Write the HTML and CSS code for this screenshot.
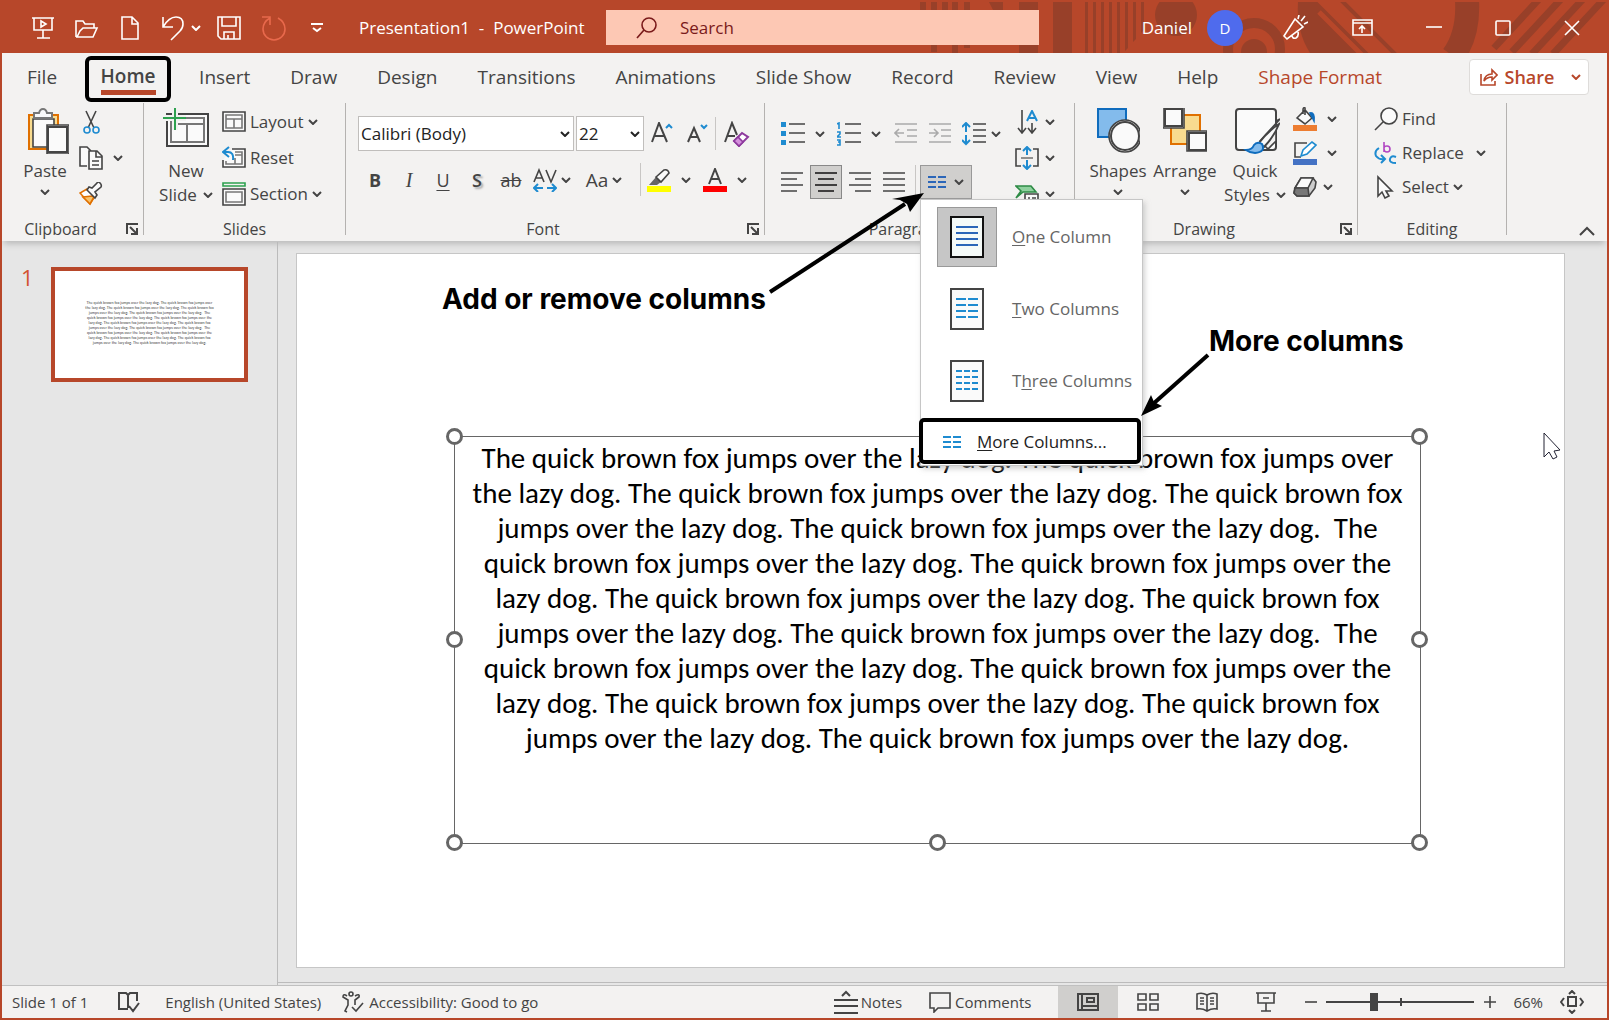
FILE: index.html
```html
<!DOCTYPE html>
<html lang="en">
<head>
<meta charset="utf-8">
<title>Presentation1 - PowerPoint</title>
<link rel="stylesheet" href="styles.css">
</head>
<body>
<svg class="defs" aria-hidden="true">
  <symbol id="chev" viewBox="0 0 10 6"><path d="M1 1l4 4 4-4" fill="none" stroke="currentColor" stroke-width="2"/></symbol>
  <symbol id="launch" viewBox="0 0 12 12"><path d="M1 11V1h11M4 4l6 6M11 5v6H5" fill="none" stroke="currentColor" stroke-width="2"/></symbol>
  <symbol id="cols" viewBox="0 0 18 12"><path d="M0 1h8M10 1h8M0 6h8M10 6h8M0 11h8M10 11h8" fill="none" stroke="currentColor" stroke-width="2"/></symbol>
</svg>

<header class="titlebar">
  <svg class="pattern" viewBox="0 0 700 51" aria-hidden="true">
    <g fill="#984029">
      <path d="M13 0h6v8h-6zM24 0h6v50h-6zM35 0h6v8h-6zM45 0h6v51h-6zM57 0h6v46h-6zM82 0h14v8H86zM112 0h19v51h-19zM146 0h19v51h-19z"/>
      <path d="M178 0h3v51h-3zM186 0h3v51h-3zM194 0h3v51h-3zM202 0h3v51h-3zM210 0h3v51h-3zM218 0h3v46l-3 3zM226 0h3v37l-3 3zM234 0h3v28l-3 3z"/>
      <circle cx="269" cy="13" r="21"/>
      <circle cx="347" cy="50" r="13"/>
      <path d="M391 0h22l50 51h-60q-14-22-12-51z"/>
    </g>
    <circle cx="347" cy="47" r="26" fill="none" stroke="#984029" stroke-width="10"/>
    <path d="M412 10l43 43M412-2l55 55M424-4l58 58" fill="none" stroke="#b7472a" stroke-width="5"/>
    <path d="M426-10l64 64" fill="none" stroke="#984029" stroke-width="4"/>
    <path d="M560-2q2 34-14 56" fill="none" stroke="#984029" stroke-width="24"/>
    <path d="M633-4l-46 50M655-4l-50 54M677-4l-52 56M698-4l-52 56" fill="none" stroke="#984029" stroke-width="7"/>
  </svg>
  <div class="quick">
    <button aria-label="Present"><svg width="24" height="24" viewBox="0 0 24 24"><path d="M1 2h22M3 2v12h18V2M12 14v8M6 22h13M10 5v6l5-3z"/></svg></button>
    <button aria-label="Open"><svg width="24" height="24" viewBox="0 0 24 24"><path d="M1 21V5h7l2 3h9v4M1 21h17l4-9H8l-3 3-3 6"/></svg></button>
    <button aria-label="New file"><svg width="22" height="24" viewBox="-2 0 22 24"><path d="M1 1h10l6 6v16H1zM11 1v7h6"/></svg></button>
    <button aria-label="Undo" class="undo"><svg width="24" height="26" viewBox="0 0 24 26"><path d="M2 2v10h10M2 12Q8 2 15 2q7 0 7 7 0 4-3 7l-9 9"/></svg><svg class="chev"><use href="#chev"/></svg></button>
    <button aria-label="Save"><svg width="24" height="24" viewBox="0 0 24 24"><path d="M1 1h22v22H4l-3-3zM5 1v9h14V1M7 23v-7h10v7M11 23v-4"/></svg></button>
    <button aria-label="Redo" class="dim"><svg width="26" height="26" viewBox="0 0 26 26"><path d="M1 2h8v8M9 3Q2 7 2 14a11 11 0 0 0 22 0q0-7-7-11"/></svg></button>
    <button aria-label="Customize toolbar" class="custom"><svg width="12" height="10" viewBox="0 0 12 10"><path stroke-width="2" d="M0 1h12M2 5l4 3 4-3"/></svg></button>
  </div>
  <div class="doc-title">Presentation1&nbsp; -&nbsp; PowerPoint</div>
  <label class="search">
    <svg width="22" height="24" viewBox="0 0 22 24"><circle cx="13" cy="9" r="7"/><path d="M8 14l-7 8"/></svg>
    <input type="text" placeholder="Search" aria-label="Search">
  </label>
  <div class="account">
    <span>Daniel</span><span class="avatar">D</span>
    <button class="a-pen" aria-label="What's new"><svg width="26" height="26" viewBox="0 0 26 26"><path d="M13 4l8 8L5 24l-3-3zM10 20q0 4 4 3 3-2 2-6M16 4l1-4M19 6l4-5M22 9l4-2"/></svg></button>
    <button class="a-rib" aria-label="Ribbon display options"><svg width="21" height="17" viewBox="0 0 21 17"><path d="M1 1h19v15H1zM1 4h19M10 14V7M7 10l3-3 3 3"/></svg></button>
    <button class="a-win" aria-label="Minimize"><svg width="16" height="16" viewBox="0 0 16 16"><path d="M0 7h16"/></svg></button>
    <button class="a-win" aria-label="Maximize"><svg width="16" height="16" viewBox="0 0 16 16"><rect x="1" y="1" width="14" height="14" rx="1"/></svg></button>
    <button class="a-win" aria-label="Close"><svg width="16" height="16" viewBox="0 0 16 16"><path d="M1 1l14 14M15 1L1 15"/></svg></button>
  </div>
</header>

<nav class="tabs">
  <a href="#file">File</a>
  <a href="#home" class="active"><span>Home</span></a>
  <a href="#insert">Insert</a>
  <a href="#draw">Draw</a>
  <a href="#design">Design</a>
  <a href="#transitions">Transitions</a>
  <a href="#animations">Animations</a>
  <a href="#slideshow">Slide Show</a>
  <a href="#record">Record</a>
  <a href="#review">Review</a>
  <a href="#view">View</a>
  <a href="#help">Help</a>
  <a href="#shape" class="context">Shape Format</a>
  <button class="share"><svg width="18" height="18" viewBox="0 0 18 18"><path d="M1 6v11h14v-4M4 13q1-7 8-7V2l5 5-5 5V9q-5 0-8 4z"/></svg>Share<svg class="chev"><use href="#chev"/></svg></button>
</nav>

<section class="ribbon">
  <div class="group clipboard">
    <div class="body">
      <button class="big paste"><svg width="48" height="46" viewBox="-6 0 48 46"><path d="M2 7h29v34H2z" fill="#f8db8f" stroke="#e07000" stroke-width="2"/><path d="M6 11h21v28H6z" fill="#fafafa"/><path d="M7 10V5h5q1-4 4-4t4 4h5v5z" fill="#fafafa" stroke="#777" stroke-width="2"/><path d="M20 17h22v29H20z" fill="#f3f2f1"/><path d="M21 19h19v25H21z" fill="#fafafa" stroke="#444" stroke-width="2"/></svg><span>Paste</span><svg class="chev"><use href="#chev"/></svg></button>
      <div class="col">
        <button aria-label="Cut"><svg width="24" height="24" viewBox="0 0 24 24"><path d="M7 1l8 17M17 1L9 18"/><g stroke="#1e8bd0"><circle cx="8" cy="20" r="3"/><circle cx="17" cy="20" r="3"/></g></svg></button>
        <button class="split" aria-label="Copy"><svg width="24" height="24" viewBox="0 0 24 24"><path d="M8 20H1V1h7l4 4" fill="#fafafa"/><path d="M10 5h8l5 5v13H10z" fill="#fafafa"/><path d="M17 5v6h6M13 15h7M13 19h7"/></svg><svg class="chev"><use href="#chev"/></svg></button>
        <button aria-label="Format painter"><svg width="24" height="24" viewBox="0 0 24 24"><path d="M8 7L1 11l10 11 5-8z" fill="#fff" stroke="#e07000"/><path d="M4 15l9-1 2 1-4 7z" fill="#f8c36a" stroke="#e07000"/><path d="M8 8l8 8 2-3-2-3 6-5q1-2-1-4t-3 0l-5 5-3-1z" fill="#fafafa"/></svg></button>
      </div>
    </div>
    <div class="label">Clipboard</div>
    <button class="launcher" aria-label="Clipboard options"><svg><use href="#launch"/></svg></button>
  </div>

  <div class="group slides">
    <div class="body">
      <button class="big newslide"><svg width="46" height="46" viewBox="0 2 46 46"><path d="M4 8h41v32H4z" fill="#fafafa" stroke="#444" stroke-width="2"/><path d="M8 12h33v24H8zM8 18h33M24 18v18" fill="none" stroke="#777" stroke-width="2"/><path d="M0 12h23M12 2v22" stroke="#f3f2f1" stroke-width="6"/><path d="M0 12h23M12 2v22" stroke="#2ea14f" stroke-width="2"/></svg><span>New</span><span class="drop">Slide <svg class="chev"><use href="#chev"/></svg></span></button>
      <div class="col text">
        <button><svg width="24" height="24" viewBox="0 0 24 24"><path d="M1 2h22v19H1z" fill="#fafafa"/><path stroke="#777" d="M4 5h16v13H4zM4 9h16M12 9v9"/></svg>Layout <svg class="chev"><use href="#chev"/></svg></button>
        <button><svg width="24" height="24" viewBox="0 0 24 24"><path d="M1 14v7h22V3H10" fill="#fafafa"/><path stroke="#777" d="M4 15v3h16V6h-7M13 12v6M13 9h7"/><path stroke="#1e8bd0" stroke-width="2" d="M7 1L1 6l6 5M2 6h4q6 0 5 8"/></svg>Reset</button>
        <button><svg width="24" height="24" viewBox="0 0 24 24"><path stroke="#2ea14f" d="M1 1h22v3H1z"/><path d="M1 7h22v16H1z" fill="#fafafa"/><path stroke="#777" d="M4 10h16v10H4z"/></svg>Section <svg class="chev"><use href="#chev"/></svg></button>
      </div>
    </div>
    <div class="label">Slides</div>
  </div>

  <div class="group font">
    <div class="rows">
      <div class="row">
        <span class="combo face"><select aria-label="Font"><option>Calibri (Body)</option></select><svg class="chev"><use href="#chev"/></svg></span>
        <span class="combo size"><select aria-label="Font size"><option>22</option></select><svg class="chev"><use href="#chev"/></svg></span>
        <button class="grow" aria-label="Increase font size"><svg width="24" height="24" viewBox="0 0 24 24"><path d="M1 20L8 1l8 19M4 14h9" stroke-width="2"/><path d="M15 6l3-3 3 3" stroke="#1e8bd0" stroke-width="2"/></svg></button>
        <button class="shrink" aria-label="Decrease font size"><svg width="24" height="24" viewBox="0 0 24 24"><path d="M1 20L7 6l6 14M3 15h8" stroke-width="2"/><path d="M14 3l3 3 3-3" stroke="#1e8bd0" stroke-width="2"/></svg></button>
        <i class="sep"></i>
        <button class="clear" aria-label="Clear formatting"><svg width="26" height="26" viewBox="0 0 26 26"><path d="M1 21L8 2l5 12M4 15h7" stroke-width="2"/><path d="M10 20l8-8 6 4-9 9z" fill="#fff" stroke="#8e3a9e" stroke-width="2"/><path d="M10 20l4-4 5 5-4 4z" fill="#d48fdc" stroke="#8e3a9e"/></svg></button>
      </div>
      <div class="row second">
        <button class="ch"><b>B</b></button>
        <button class="ch"><em>I</em></button>
        <button class="ch"><u>U</u></button>
        <button class="ch shadow">S</button>
        <button class="ch strike">ab</button>
        <button class="split tight" aria-label="Character spacing"><svg width="24" height="24" viewBox="0 0 24 24"><path d="M1 14L6 2l5 12M3 10h6M13 2l5 12 5-12"/><path d="M10 20H1M5 16l-4 4 4 4M14 20h9M19 16l4 4-4 4" stroke="#1e8bd0" stroke-width="2"/></svg><svg class="chev"><use href="#chev"/></svg></button>
        <button class="split tight case">Aa<svg class="chev"><use href="#chev"/></svg></button>
        <i class="sep"></i>
        <button class="split wide" aria-label="Highlight color"><svg width="24" height="24" viewBox="0 0 24 24"><path d="M2 17l7-8 5 5-4 3z" fill="#666" stroke="none"/><path d="M9 9l8-7q4-1 5 3l-8 9z" fill="#fafafa"/><path d="M0 18h24v6H0z" fill="#ff0" stroke="none"/></svg><svg class="chev"><use href="#chev"/></svg></button>
        <button class="split wide" aria-label="Font color"><svg width="24" height="24" viewBox="0 0 24 24"><path d="M6 16L12 1l6 15M8 11h8" stroke-width="2"/><path d="M0 18h24v6H0z" fill="#f00" stroke="none"/></svg><svg class="chev"><use href="#chev"/></svg></button>
      </div>
    </div>
    <div class="label">Font</div>
    <button class="launcher" aria-label="Font options"><svg><use href="#launch"/></svg></button>
  </div>

  <div class="group paragraph">
    <div class="body">
      <div class="rows">
        <div class="row">
          <button class="split wide" aria-label="Bullets"><svg width="24" height="24" viewBox="0 0 24 24"><path d="M0 0h5v5H0zM0 9h5v5H0zM0 18h5v5H0z" fill="#1e8bd0" stroke="none"/><path d="M8 2h16M8 11h16M8 20h16"/></svg><svg class="chev"><use href="#chev"/></svg></button>
          <button class="split wide" aria-label="Numbering"><svg width="24" height="24" viewBox="0 0 24 24"><path d="M0 2l2-1v6M0 10h3v2l-3 3h4M0 18h3v5H0M1 20h2" stroke="#1e8bd0"/><path d="M8 2h16M8 11h16M8 20h16"/></svg><svg class="chev"><use href="#chev"/></svg></button>
          <button class="dent" aria-label="Decrease indent"><svg width="24" height="24" viewBox="0 0 24 24"><path stroke="#aaa" d="M1 2h22M13 8h10M13 14h10M1 20h22M10 11H2M5 7l-4 4 4 4"/></svg></button>
          <button class="dent" aria-label="Increase indent"><svg width="24" height="24" viewBox="0 0 24 24"><path stroke="#aaa" d="M1 2h22M13 8h10M13 14h10M1 20h22M1 11h9M6 7l4 4-4 4"/></svg></button>
          <button class="split spacing" aria-label="Line spacing"><svg width="24" height="24" viewBox="0 0 24 24"><path d="M11 2h13M11 8h13M11 14h13M11 20h13"/><path d="M4 10V2M0 5l4-4 4 4M4 13v9M0 18l4 4 4-4" stroke="#1e8bd0" stroke-width="2"/></svg><svg class="chev"><use href="#chev"/></svg></button>
        </div>
        <div class="row second">
          <button class="al" aria-label="Align left"><svg width="22" height="20" viewBox="0 0 22 20"><path d="M0 1h22M0 7h16M0 13h22M0 19h16"/></svg></button>
          <button class="al on" aria-label="Center"><svg width="22" height="20" viewBox="0 0 22 20"><path d="M0 1h22M3 7h16M0 13h22M3 19h16"/></svg></button>
          <button class="al" aria-label="Align right"><svg width="22" height="20" viewBox="0 0 22 20"><path d="M0 1h22M6 7h16M0 13h22M6 19h16"/></svg></button>
          <button class="al" aria-label="Justify"><svg width="22" height="20" viewBox="0 0 22 20"><path d="M0 1h22M0 7h22M0 13h22M0 19h22"/></svg></button>
          <i class="sep"></i>
          <div class="columns">
            <button class="colbtn" aria-label="Columns"><svg width="18" height="12"><use href="#cols"/></svg><svg class="chev"><use href="#chev"/></svg></button>
            <div class="menu">
              <button class="item"><span class="page chosen"><svg width="34" height="42" viewBox="0 0 34 42"><path class="sheet" d="M1 1h32v40H1z"/><path d="M6 11h22M6 17h22M6 23h22M6 29h22"/></svg></span><span><u>O</u>ne Column</span></button>
              <button class="item"><span class="page"><svg width="34" height="42" viewBox="0 0 34 42"><path class="sheet" d="M1 1h32v40H1z"/><path d="M6 11h10M18 11h10M6 17h10M18 17h10M6 23h10M18 23h10M6 29h10M18 29h10"/></svg></span><span><u>T</u>wo Columns</span></button>
              <button class="item"><span class="page"><svg width="34" height="42" viewBox="0 0 34 42"><path class="sheet" d="M1 1h32v40H1z"/><path d="M6 11h6M14 11h6M22 11h6M6 17h6M14 17h6M22 17h6M6 23h6M14 23h6M22 23h6M6 29h6M14 29h6M22 29h6"/></svg></span><span>T<u>h</u>ree Columns</span></button>
              <button class="more"><svg width="18" height="12"><use href="#cols"/></svg><span><u>M</u>ore Columns...</span></button>
            </div>
          </div>
        </div>
      </div>
      <div class="col textcol">
        <button class="split" aria-label="Text direction"><svg width="24" height="24" viewBox="0 0 24 24"><path d="M7 0v22M3 18l4 5 4-5M17 13v9M13 18l4 5 4-5"/><path d="M12 11l5-10 5 10M14 8h6" stroke="#1e8bd0" stroke-width="2"/></svg><svg class="chev"><use href="#chev"/></svg></button>
        <button class="split" aria-label="Align text"><svg width="24" height="24" viewBox="0 0 24 24"><path d="M6 3H1v17h5M18 3h5v17h-5"/><path d="M6 12h12" stroke="#777"/><path d="M12 9V1M8 5l4-4 4 4M12 14v9M8 19l4 4 4-4" stroke="#1e8bd0" stroke-width="2"/></svg><svg class="chev"><use href="#chev"/></svg></button>
        <button class="split" aria-label="Convert to SmartArt"><svg width="24" height="24" viewBox="0 0 24 24"><path d="M1 4h15l5 6H8l-7 6 5-7z" fill="#8fd19e" stroke="#2e8b46"/><path d="M10 12h13v11H10z" fill="#fafafa"/><path d="M13 16h2M17 16h4M13 20h2M17 20h4"/></svg><svg class="chev"><use href="#chev"/></svg></button>
      </div>
    </div>
    <div class="label">Paragraph</div>
  </div>

  <div class="group drawing">
    <div class="body">
      <button class="big shapes"><svg width="44" height="46" viewBox="0 1 44 46"><path d="M2 2h28v28H2z" fill="#83bbec" stroke="#0f6cbd" stroke-width="2"/><circle cx="29" cy="29" r="16" fill="#f3f2f1"/><circle cx="29" cy="29" r="14" fill="#fafafa" stroke="#444" stroke-width="2"/></svg><span>Shapes</span><svg class="chev"><use href="#chev"/></svg></button>
      <button class="big arrange"><svg width="44" height="46" viewBox="0 1 44 46"><path d="M8 8h29v29H8z" fill="#f8db8f" stroke="#e07000" stroke-width="2"/><path d="M0 0h21v21H0zM24 24h20v20H24z" fill="#f3f2f1"/><path d="M2 2h17v17H2zM26 26h17v17H26z" fill="#fafafa" stroke="#444" stroke-width="2"/></svg><span>Arrange</span><svg class="chev"><use href="#chev"/></svg></button>
      <button class="big styles"><svg width="50" height="46" viewBox="-4 1 50 46"><rect x="2" y="2" width="40" height="41" rx="3" fill="#fafafa" stroke="#444" stroke-width="2"/><path d="M46 12L26 34l8 8 8-8V14z" fill="#f3f2f1"/><path d="M45 17Q34 24 25 36l5 4Q40 30 45 17z" fill="#fafafa" stroke="#444" stroke-width="2"/><path d="M12 43q6 0 8-5 3-4 8-1 4 8-7 9-5 0-9-3z" fill="#83bbec" stroke="#0f6cbd" stroke-width="2"/></svg><span>Quick</span><span class="drop">Styles <svg class="chev"><use href="#chev"/></svg></span></button>
      <div class="col fx">
        <button class="split" aria-label="Shape fill"><svg width="24" height="24" viewBox="0 0 24 24"><path d="M4 11l8-8 7 8-7 6zM12 8V1q-2-1-2 2v4" fill="#fafafa"/><path d="M17 6q5-1 4 8l-3-6z" fill="#0f6cbd" stroke="#0f6cbd"/><path d="M0 18h24v6H0z" fill="#ed7d31" stroke="none"/></svg><svg class="chev"><use href="#chev"/></svg></button>
        <button class="split" aria-label="Shape outline"><svg width="24" height="24" viewBox="0 0 24 24"><path d="M14 2H2v14h6"/><path d="M8 15l2-6 9-8 4 3-9 9z" fill="#fff" stroke="#1e8bd0"/><path d="M0 18h24v6H0z" fill="#4472c4" stroke="none"/></svg><svg class="chev"><use href="#chev"/></svg></button>
        <button class="split effects" aria-label="Shape effects"><svg width="24" height="24" viewBox="0 0 24 24"><path d="M8 3h12l3 4-1 6-6 8H4l-3-3 1-5z" fill="#ccc"/><path d="M8 3h12l-5 10H2z" fill="#fafafa"/><path d="M2 13h13l1 8H4l-3-3z" fill="#777"/></svg><svg class="chev"><use href="#chev"/></svg></button>
      </div>
    </div>
    <div class="label">Drawing</div>
    <button class="launcher" aria-label="Drawing options"><svg><use href="#launch"/></svg></button>
  </div>

  <div class="group editing">
    <div class="body">
      <div class="col text">
        <button><svg width="24" height="24" viewBox="0 0 24 24"><circle cx="15" cy="9" r="8" fill="#fafafa"/><path d="M9 15l-8 8"/></svg>Find</button>
        <button class="rep"><svg width="24" height="24" viewBox="0 0 24 24"><path d="M10 1v10M10 7q0-2 3-2t3 3-3 3-3-3" stroke="#b146c2"/><path d="M5 7q-5 3-3 8 3 4 9 3M7 14l4 4-4 4M22 16q-5-2-6 2t6 4" stroke="#1e8bd0" stroke-width="2"/></svg>Replace <svg class="chev"><use href="#chev"/></svg></button>
        <button><svg width="24" height="24" viewBox="0 0 24 24"><path d="M4 2v19l4-4 3 6 4-2-3-5h6z" fill="#fafafa"/></svg>Select <svg class="chev"><use href="#chev"/></svg></button>
      </div>
    </div>
    <div class="label">Editing</div>
  </div>
  <button class="collapse" aria-label="Collapse the ribbon"><svg width="16" height="10" viewBox="0 0 16 10"><path d="M1 9l7-7 7 7" stroke-width="2"/></svg></button>
</section>

<main class="workspace">
  <aside class="thumbs">
    <span class="num">1</span>
    <div class="thumb"><p>The quick brown fox jumps over the lazy dog. The quick brown fox jumps over<br>the lazy dog. The quick brown fox jumps over the lazy dog. The quick brown fox<br>jumps over the lazy dog. The quick brown fox jumps over the lazy dog.&nbsp; The<br>quick brown fox jumps over the lazy dog. The quick brown fox jumps over the<br>lazy dog. The quick brown fox jumps over the lazy dog. The quick brown fox<br>jumps over the lazy dog. The quick brown fox jumps over the lazy dog.&nbsp; The<br>quick brown fox jumps over the lazy dog. The quick brown fox jumps over the<br>lazy dog. The quick brown fox jumps over the lazy dog. The quick brown fox<br>jumps over the lazy dog. The quick brown fox jumps over the lazy dog.</p></div>
  </aside>
  <div class="stage">
    <div class="slide">
      <div class="textbox">
        <p>The quick brown fox jumps over the lazy dog. The quick brown fox jumps over<br>the lazy dog. The quick brown fox jumps over the lazy dog. The quick brown fox<br>jumps over the lazy dog. The quick brown fox jumps over the lazy dog.&nbsp; The<br>quick brown fox jumps over the lazy dog. The quick brown fox jumps over the<br>lazy dog. The quick brown fox jumps over the lazy dog. The quick brown fox<br>jumps over the lazy dog. The quick brown fox jumps over the lazy dog.&nbsp; The<br>quick brown fox jumps over the lazy dog. The quick brown fox jumps over the<br>lazy dog. The quick brown fox jumps over the lazy dog. The quick brown fox<br>jumps over the lazy dog. The quick brown fox jumps over the lazy dog.</p>
        <i class="handle nw"></i><i class="handle ne"></i><i class="handle w"></i><i class="handle e"></i><i class="handle sw"></i><i class="handle s"></i><i class="handle se"></i>
      </div>
    </div>
  </div>
</main>

<footer class="status">
  <span class="count">Slide 1 of 1</span>
  <button class="spell" aria-label="Spelling"><svg width="22" height="22" viewBox="0 0 22 22"><path d="M10 18H1V2h7l2 2v13M10 4l2-2h7v8M11 15l4 5 6-8" stroke-width="2"/></svg></button>
  <button class="lang">English (United States)</button>
  <button class="access"><svg width="22" height="22" viewBox="0 0 22 22"><circle cx="9" cy="3" r="2"/><path d="M5 5Q1 2 1 6l5 3v5l-3 6 2 1M13 5q5-3 4 1l-4 3v5M10 16l4 4 7-8"/></svg>Accessibility: Good to go</button>
  <div class="right">
    <button class="notes"><svg width="24" height="24" viewBox="0 0 24 24"><path d="M8 6l4-4 4 4M0 10h24M0 16h24M0 23h24" stroke-width="2"/></svg>Notes</button>
    <button class="comments"><svg width="22" height="22" viewBox="0 0 22 22"><path d="M1 2h20v15H9l-4 4v-4H1z"/></svg>Comments</button>
    <button class="view on" aria-label="Normal view"><svg width="22" height="18" viewBox="0 0 22 18"><path d="M1 1h20v16H1zM5 1v16M5 13h16M10 5h7v4h-7z" stroke-width="2"/></svg></button>
    <button class="view" aria-label="Slide sorter"><svg width="22" height="18" viewBox="0 0 22 18"><path d="M1 1h8v6H1zM13 1h8v6h-8zM1 11h8v6H1zM13 11h8v6h-8z"/></svg></button>
    <button class="view" aria-label="Reading view"><svg width="22" height="20" viewBox="0 0 22 20"><path d="M11 3Q6 0 1 2v15q5-1 10 2 5-3 10-2V2q-5-2-10 1v16M4 6h4M4 9h4M4 12h4M14 6h4M14 9h4M14 12h4"/></svg></button>
    <button class="view" aria-label="Slide show"><svg width="20" height="20" viewBox="0 0 20 20"><path d="M0 1h20M2 1v10h16V1M10 11v8M5 19h10M7 6h6"/></svg></button>
    <button class="zoombtn" aria-label="Zoom out"><svg width="12" height="12" viewBox="0 0 12 12"><path d="M0 6h12"/></svg></button>
    <span class="track"><input type="range" min="10" max="400" value="130" aria-label="Zoom"></span>
    <button class="zoombtn" aria-label="Zoom in"><svg width="12" height="12" viewBox="0 0 12 12"><path d="M0 6h12M6 0v12"/></svg></button>
    <span class="pct">66%</span>
    <button class="fit" aria-label="Fit to window"><svg width="24" height="24" viewBox="0 0 24 24"><path d="M8 7h8v9H8zM9 4l3-3 3 3M9 20l3 3 3-3M4 8l-3 4 3 4M20 8l3 4-3 4" stroke-width="2"/></svg></button>
  </div>
</footer>

<div class="note add">Add or remove columns</div>
<div class="note morecols">More columns</div>
<svg class="arrow a1" width="160" height="108" viewBox="0 0 160 108"><path d="M5 103L140 15" stroke="#000" stroke-width="4"/><path d="M159 4l-14 19-3-8-7-4-8-1z"/></svg>
<svg class="arrow a2" width="72" height="66" viewBox="0 0 72 66"><path d="M69 4L14 53" stroke="#000" stroke-width="4"/><path d="M2 65L12 44l3 7 8 4z"/></svg>
<svg class="arrow pointer" width="20" height="28" viewBox="0 0 20 28"><path d="M3 1v24l5-5 4 7 4-2-3-6 6-1z" fill="#fff" stroke="#223" stroke-width="1"/></svg>
</body>
</html>
```
FILE: styles.css
```css
* { box-sizing: border-box; }
body {
  margin: 0;
  min-height: 100vh;
  display: flex;
  flex-direction: column;
  position: relative;
  border: 2px solid #b7472a;
  background: #e6e6e6;
  color: #444;
  font: 17px/24px "Open Sans", "Noto Sans", sans-serif;
  overflow-x: hidden;
}
button, input, select { font: inherit; color: inherit; }
button { border: 0; padding: 0; margin: 0; background: none; display: inline-flex; align-items: center; justify-content: center; white-space: nowrap; flex: none; }
a { color: inherit; text-decoration: none; }
svg { fill: none; stroke: currentColor; stroke-width: 1.6; flex: none; display: block; }
.defs { position: absolute; width: 0; height: 0; }
.chev { width: 10px; height: 6px; stroke: none; }

/* Title bar */
.titlebar { position: relative; height: 51px; background: #b7472a; color: #fff; display: flex; align-items: center; flex: none; }
.pattern { position: absolute; right: 0; top: 0; width: 700px; height: 51px; stroke: none; }
.quick { display: flex; align-items: center; gap: 20px; padding-left: 29px; width: 357px; flex: none; }
.undo { gap: 6px; margin-right: -4px; }
.dim { color: #e8694c; }
.custom { margin-left: 4px; }
.doc-title { width: 247px; flex: none; white-space: nowrap; }
.search { position: relative; width: 433px; height: 35px; background: #fdc8b4; color: #7a1a1a; display: flex; align-items: center; padding-left: 30px; gap: 22px; }
.search input { border: 0; background: none; outline: 0; padding: 0; width: 300px; }
.search input::placeholder { color: #7a1a1a; opacity: 1; }
.account { position: relative; margin-left: auto; display: flex; align-items: center; padding-right: 27px; }
.avatar { width: 36px; height: 36px; border-radius: 50%; background: #4f6bed; display: grid; place-items: center; margin-left: 15px; font-size: 15px; }
.a-pen { margin-left: 39px; }
.a-rib { margin-left: 44px; }
.a-win { margin-left: 53px; }

/* Tabs */
.tabs { position: relative; z-index: 3; display: flex; align-items: center; height: 48px; padding: 0 18px 0 25px; background: #f3f2f1; font-size: 19px; flex: none; gap: 40px; white-space: nowrap; }
.tabs .active { display: flex; justify-content: center; width: 86px; height: 46px; margin: 4px -12px 0; border: 4px solid #000; border-radius: 6px; font-weight: 600; }
.tabs .active span { border-bottom: 5px solid #b7472a; height: 35px; padding-top: 4px; }
.tabs .context { color: #b7472a; }
.share { margin-left: auto; width: 120px; height: 36px; padding-left: 3px; background: #fff; border: 1px solid #dedcda; border-radius: 4px; color: #b7472a; font-size: 18px; font-weight: 600; gap: 7px; }
.share .chev { margin-left: 10px; }

/* Ribbon */
.ribbon { position: relative; z-index: 2; display: flex; height: 140px; padding-top: 2px; background: #f3f2f1; box-shadow: 0 5px 6px -2px #bbb; flex: none; }
.group { position: relative; height: 132px; border-right: 1px solid #b4b2b0; flex: none; }
.clipboard { width: 142px; }
.slides { width: 202px; }
.font { width: 419px; }
.paragraph { width: 310px; }
.drawing { width: 283px; }
.editing { width: 149px; }
.body { display: flex; height: 114px; }
.label { text-align: center; font-size: 16px; height: 18px; line-height: 25px; }
.clipboard .label, .font .label, .drawing .label, .paragraph .label { padding-right: 24px; }
.launcher { position: absolute; right: 5px; bottom: 0; }
.launcher svg { width: 12px; height: 12px; stroke: none; }
.big { flex-direction: column; justify-content: flex-start; padding-top: 5px; font-size: 17px; }
.big > svg:first-child { height: 46px; margin-bottom: 5px; }
.big > .chev { margin-top: 6px; }
.big span { line-height: 24px; }
.drop { display: flex; align-items: center; gap: 6px; }
.paste { width: 60px; margin-left: 13px; }
.newslide { width: 60px; margin-left: 12px; }
.shapes { width: 66px; margin-left: 10px; }
.arrange { width: 68px; }
.styles { width: 66px; margin-left: 3px; }
.col { display: flex; flex-direction: column; gap: 12px; padding-top: 7px; align-items: flex-start; margin-left: 4px; }
.col.text button { gap: 4px; height: 24px; }
.col .split { gap: 10px; }
.slides .col { margin-left: 6px; }
.rows { padding-top: 13px; height: 114px; }
.row { display: flex; align-items: center; height: 35px; }
.row.second { margin-top: 13px; }
.font .rows { padding-left: 12px; }
.font .row.second { margin-top: 11px; }
.combo { position: relative; display: flex; }
.combo select { appearance: none; width: 100%; height: 35px; border: 1px solid #c0bebc; background: #fff; color: #222; padding: 0 2px; border-radius: 0; }
.combo .chev { position: absolute; right: 4px; top: 15px; color: #222; }
.face { width: 216px; margin-right: 2px; }
.size { width: 68px; }
.grow { margin-left: 7px; }
.shrink { margin-left: 12px; }
.sep { width: 1px; height: 33px; background: #c8c6c4; }
.row .shrink + .sep { margin-left: 4px; }
.clear { margin-left: 8px; }
.ch { width: 34px; font-size: 18px; }
.ch em { font-family: "Liberation Serif", serif; font-size: 20px; }
.ch u { text-underline-offset: 3px; }
.shadow { text-shadow: 2px 2px 2px #aaa; font-weight: 600; }
.strike { text-decoration: line-through; }
.tight { gap: 4px; width: 48px; }
.case { width: 56px; font-size: 19px; }
.second .case + .sep { margin-left: 8px; }
.wide { gap: 10px; width: 56px; }
.paragraph .rows { padding-left: 10px; width: 246px; }
.paragraph .dent { width: 34px; }
.paragraph .row:first-child .wide + .dent { margin-left: 2px; }
.spacing { gap: 5px; margin-left: 4px; width: 40px; }
.al { width: 34px; height: 34px; }
.on { background: #d0cfcd; }
.al.on { border: 1px solid #888; color: #111; width: 32px; margin: 0 1px; }
.columns { position: relative; margin-left: 4px; }
.paragraph .sep { margin-left: 4px; }
.colbtn { width: 52px; height: 34px; border: 1px solid #999; background: #d0cfcd; gap: 8px; }
.colbtn svg:first-child { color: #2b66b8; }
.textcol { margin-left: 4px; }
.textcol .split { gap: 6px; }
.fx { gap: 10px; margin-left: 5px; padding-top: 4px; }
.col .effects { gap: 6px; }
.editing .col { gap: 10px; margin-left: 16px; padding-top: 4px; }
.rep .chev { margin-left: 8px; }
.collapse { margin: auto 12px 5px auto; }

/* Columns menu */
.menu { position: absolute; left: 0; top: 34px; width: 223px; height: 267px; background: #fff; border: 1px solid #c6c6c6; box-shadow: 2px 3px 5px #aaa8; padding-top: 7px; color: #666; }
.item { width: 100%; height: 60px; margin-bottom: 12px; padding-left: 16px; justify-content: flex-start; gap: 15px; }
.page { width: 60px; height: 60px; display: grid; place-items: center; color: #1e8bd0; }
.page svg { stroke-width: 2; }
.sheet { fill: #fafafa; stroke: #444; }
.chosen { background: #c6c6c6; border: 1px solid #999; color: #2b66b8; }
.chosen .sheet { fill: #f5faf8; stroke: #111; }
.more { position: absolute; left: -2px; bottom: 1px; width: 222px; height: 46px; border: 4px solid #000; border-radius: 5px; background: #fff; color: #222; justify-content: flex-start; padding-left: 20px; padding-top: 2px; gap: 16px; }
.more svg { color: #1e8bd0; }
.menu u { text-underline-offset: 2px; text-decoration-thickness: 1px; }

/* Workspace */
.workspace { flex: 1; display: flex; }
.thumbs { width: 276px; flex: none; border-right: 1px solid #bbb; display: flex; align-items: flex-start; padding: 25px 0 0 19px; margin-top: 1px; }
.num { width: 30px; font-size: 22px; line-height: 20px; color: #d35230; }
.thumb { width: 197px; height: 115px; border: 4px solid #b7472a; background: #fff; padding-top: 29px; }
.thumb p { margin: 0; font: 4px/5px Carlito, Lato, sans-serif; text-align: center; white-space: nowrap; }
.stage { flex: 1; padding: 12px 42px 14px 18px; border-bottom: 1px solid #bbb; margin-bottom: 2px; display: flex; }
.slide { flex: 1; background: #fff; border: 1px solid #c6c6c6; padding: 182px 143px 0 157px; }
.textbox { position: relative; height: 408px; border: 1px solid #666; padding-top: 4px; color: #000; }
.textbox p { margin: 0; font: 29px/35px Carlito, Lato, sans-serif; text-align: center; white-space: nowrap; }
.handle { position: absolute; width: 17px; height: 17px; margin: -9px; border: 3px solid #666; border-radius: 50%; background: #fff; }
.nw { left: 0; top: 0; } .ne { left: 100%; top: 0; }
.w { left: 0; top: 50%; } .e { left: 100%; top: 50%; }
.sw { left: 0; top: 100%; } .s { left: 50%; top: 100%; } .se { left: 100%; top: 100%; }

/* Status bar */
.status { display: flex; align-items: center; height: 33px; border-top: 1px solid #c0c0c0; background: #f3f2f1; font-size: 15px; padding-left: 10px; flex: none; white-space: nowrap; }
.spell { margin-left: 30px; }
.lang { margin-left: 25px; }
.access { margin-left: 21px; gap: 5px; }
.right { margin-left: auto; display: flex; align-items: center; height: 32px; padding-right: 23px; }
.notes { gap: 3px; }
.comments { margin: 0 27px; gap: 4px; }
.view { width: 60px; height: 32px; }
.view ~ .view { width: 59px; }
.zoombtn { margin-left: 10px; }
.track { position: relative; display: flex; align-items: center; width: 148px; margin-left: 9px; }
.track::before { content: ""; position: absolute; left: 50%; top: 50%; width: 2px; height: 8px; margin-top: -4px; background: #444; }
.track input { appearance: none; width: 100%; height: 18px; margin: 0; background: linear-gradient(#444, #444) center / 100% 2px no-repeat; }
.track input::-webkit-slider-thumb { appearance: none; width: 8px; height: 18px; background: #444; }
.pct { margin: 0 17px; }

/* Callouts */
.note { position: absolute; z-index: 3; font: 700 28px/32px Inter, sans-serif; color: #000; white-space: nowrap; }
.add { left: 440px; top: 281px; }
.morecols { left: 1207px; top: 323px; }
.arrow { position: absolute; z-index: 4; stroke: none; fill: #000; }
.a1 { left: 763px; top: 187px; }
.a2 { left: 1137px; top: 349px; }
.pointer { left: 1539px; top: 430px; }
```
